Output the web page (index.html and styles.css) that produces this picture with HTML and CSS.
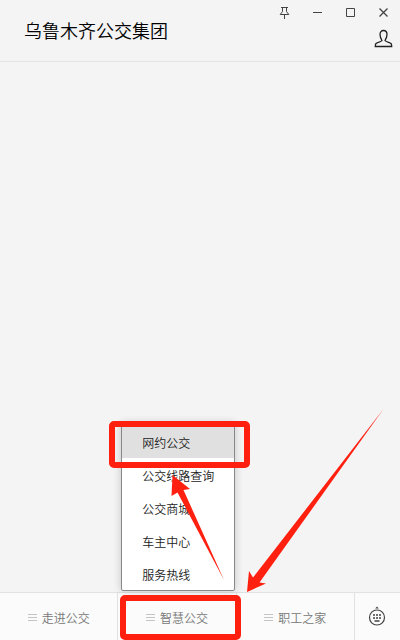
FILE: index.html
```html
<!DOCTYPE html>
<html lang="zh-CN">
<head>
    <meta charset="UTF-8">
    <meta name="viewport" content="width=device-width, initial-scale=1.0">
    <title>乌鲁木齐公交集团</title>
    <link rel="stylesheet" href="styles.css">
</head>
<body>

    <header class="header">
        <h1 class="title">乌鲁木齐公交集团</h1>
        <div class="header-actions">
            <!-- Window buttons -->
            <div class="window-controls">
                <button class="window-button" aria-label="置顶">
                    <svg width="11" height="14" viewBox="0 0 11 14">
                        <path d="M2 1.5h7M3.5 1.5v4L1.2 8.5h8.6L7.5 5.5v-4M5.5 8.5V13" />
                    </svg>
                </button>
                <button class="window-button" aria-label="最小化">
                    <svg width="11" height="11" viewBox="0 0 11 11"><path d="M1 5.5h9" /></svg>
                </button>
                <button class="window-button" aria-label="最大化">
                    <svg width="11" height="11" viewBox="0 0 11 11"><path d="M1.5 1.5h8v8h-8z" /></svg>
                </button>
                <button class="window-button" aria-label="关闭">
                    <svg class="close" width="11" height="11" viewBox="0 0 11 11"><path d="M1.5 1.5l8 8M9.5 1.5l-8 8" /></svg>
                </button>
            </div>
            <button class="profile-button" aria-label="公众号资料">
                <svg width="19" height="19" viewBox="0 0 19 19">
                    <path d="M8 11.5C6.8 9.5 6 7.5 6 5.5C6 3 7.3 1.5 9.5 1.5S13 3 13 5.5C13 7.5 12.2 9.5 11 11.5C12 13 16 13.5 17 14.5C17.6 15.1 17.7 16 17.7 17.5H1.3C1.3 16 1.4 15.1 2 14.5C3 13.5 7 13 8 11.5z" />
                </svg>
            </button>
        </div>
    </header>

    <main class="messages"></main>

    <footer class="menu-bar">
        <div class="tab">
            <button class="tab-button"><span class="lines"></span>走进公交</button>
        </div>
        <div class="tab">
            <button class="tab-button"><span class="lines"></span>智慧公交</button>

            <div class="submenu">
                <button class="submenu-item active">网约公交</button>
                <button class="submenu-item">公交线路查询</button>
                <button class="submenu-item">公交商城</button>
                <button class="submenu-item">车主中心</button>
                <button class="submenu-item">服务热线</button>
            </div>

            <!-- Red marks over the menu -->
            <div class="mark mark-item"></div>
            <div class="mark mark-tab"></div>
            <svg class="arrows" width="270" height="240" viewBox="119 400 270 240">
                <path d="M247 592L249 571L253 577.5L383.5 409L259.5 582.5L266 583.5z" />
                <path d="M172.5 475L190 489L183.5 490L224 580L177.5 492.5L171.5 496z" />
            </svg>
        </div>
        <div class="tab">
            <button class="tab-button"><span class="lines"></span>职工之家</button>
        </div>
        <button class="keyboard-button" aria-label="切换到键盘">
            <svg width="18" height="20" viewBox="0 0 18 20">
                <circle cx="9" cy="11.5" r="7.5" />
                <path class="solid" d="M7.2 2.5L9 .5l1.800 2z" />
                <path class="keys" d="M5 9h2M8 9h2M11 9h2M5 12h2M8 12h2M11 12h2M6.5 15h5" />
            </svg>
        </button>
    </footer>

</body>
</html>
```
FILE: styles.css
```css
* {
    box-sizing: border-box;
}

body {
    margin: 0;
    min-height: 100vh;
    display: flex;
    flex-direction: column;
    overflow: hidden;
    background-color: #f4f4f4;
    font-family: "Noto Sans CJK SC", sans-serif;
    font-size: 12px;
    font-weight: 350;
    color: #222222;
}

button {
    margin: 0;
    padding: 0;
    border: none;
    background: none;
    font: inherit;
    color: inherit;
    cursor: pointer;
}

svg {
    display: block;
    fill: none;
}

/* Header */
.header {
    display: flex;
    justify-content: space-between;
    height: 62px;
    border-bottom: 1px solid #e4e4e4;
}

.title {
    margin: 0;
    padding-left: 24px;
    font-size: 18px;
    font-weight: 350;
    line-height: 60px;
    color: #000000;
}

.header-actions {
    display: flex;
    flex-direction: column;
    align-items: flex-end;
}

.window-controls {
    display: flex;
}

.window-button {
    display: flex;
    align-items: center;
    justify-content: center;
    width: 33px;
    height: 25px;
}

.window-button svg {
    stroke: #444444;
}

.window-button .close {
    stroke-width: 1.3;
}

.profile-button {
    padding: 4px 7px;
}

.profile-button svg {
    stroke: #222222;
    stroke-width: 1.3;
}

.messages {
    flex: 1;
}

/* Bottom menu */
.menu-bar {
    display: flex;
    height: 48px;
    border-top: 1px solid #e2e2e2;
    background-color: #fbfbfb;
}

.tab {
    position: relative;
    flex: 1;
    border-right: 1px solid #e2e2e2;
}

.tab-button {
    display: flex;
    align-items: center;
    justify-content: center;
    gap: 5px;
    width: 100%;
    height: 100%;
    padding-top: 2px;
    color: #777777;
}

.lines {
    width: 9px;
    height: 7px;
    border-top: 1px solid #c4c4c4;
    border-bottom: 1px solid #c4c4c4;
    background: linear-gradient(#c4c4c4, #c4c4c4) center / 100% 1px no-repeat;
}

.keyboard-button {
    display: flex;
    align-items: center;
    justify-content: center;
    width: 45px;
    padding-right: 1px;
    padding-bottom: 1px;
}

.keyboard-button svg {
    stroke: #444444;
    stroke-width: 1.2;
}

.keyboard-button .solid {
    fill: #444444;
    stroke: none;
}

.keyboard-button .keys {
    stroke-width: 1.6;
}

/* Popup menu */
.submenu {
    position: absolute;
    left: 3px;
    bottom: 49px;
    width: 114px;
    padding-top: 1px;
    border: 1px solid #888888;
    border-radius: 2px;
    background-color: #ffffff;
    box-shadow: 0 0 8px rgba(0, 0, 0, 0.2);
}

.submenu-item {
    display: block;
    width: 100%;
    height: 33px;
    padding-top: 2px;
    padding-left: 20px;
    text-align: left;
}

.submenu-item.active {
    background-color: #e0e0e0;
}

/* Red marks */
.mark {
    position: absolute;
    border: 6px solid #ff2010;
    border-radius: 5px;
    pointer-events: none;
}

.mark-item {
    left: -9px;
    bottom: 172px;
    width: 141px;
    height: 47px;
}

.mark-tab {
    left: 2px;
    bottom: 0;
    width: 121px;
    height: 45px;
    z-index: 1;
}

.arrows {
    position: absolute;
    left: 1px;
    bottom: 0;
    z-index: 1;
    fill: #ff2010;
    pointer-events: none;
}
```
